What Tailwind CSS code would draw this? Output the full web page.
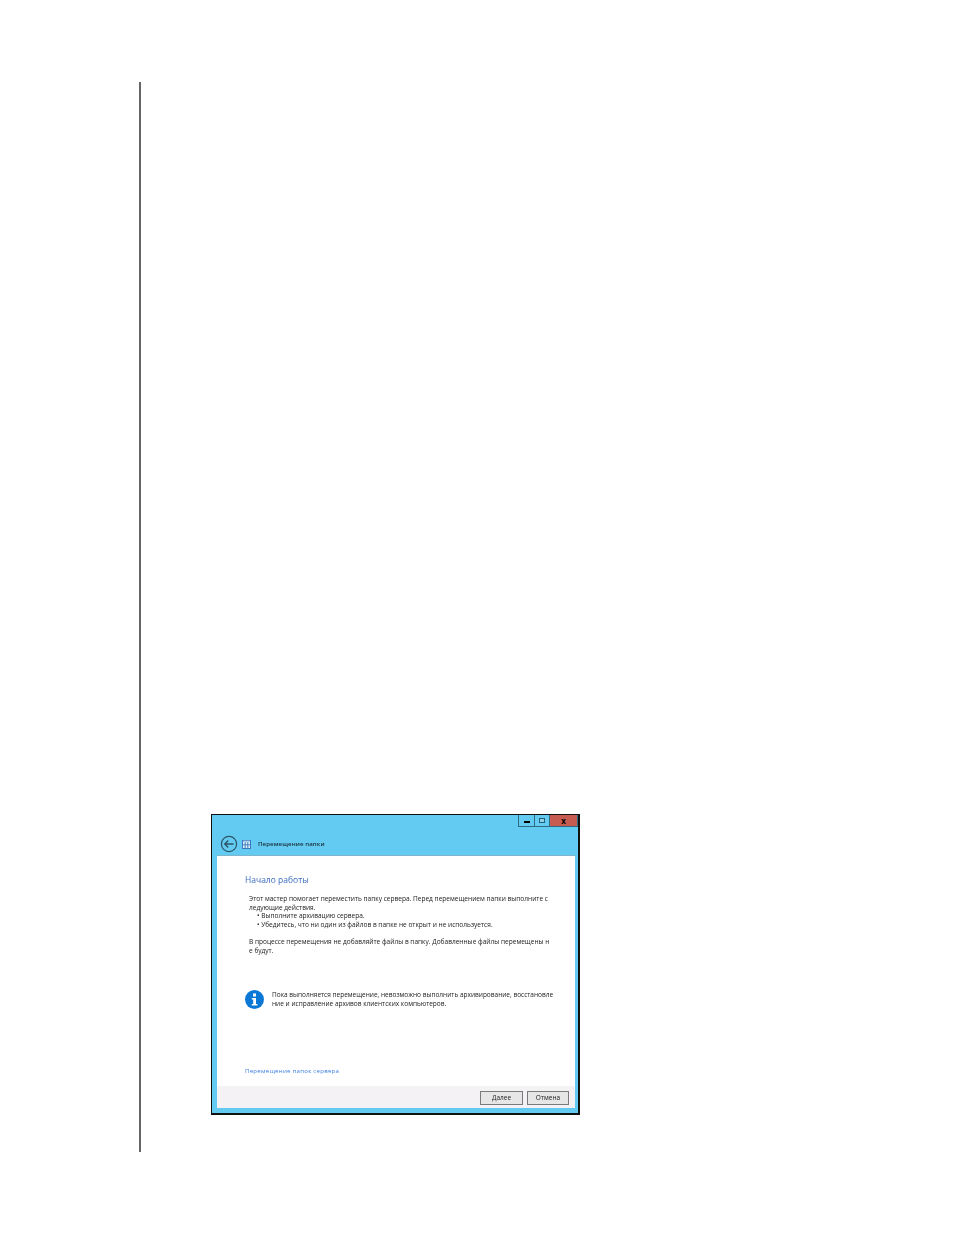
<!DOCTYPE html>
<html lang="ru">
<head>
<meta charset="utf-8">
<title>Перемещение папки</title>
<script src="https://cdn.jsdelivr.net/npm/@tailwindcss/browser@4"></script>
</head>
<body class="bg-white font-['Open_Sans','Noto_Sans',sans-serif]">
<div class="w-[954px] h-[1235px] pt-[82px] pl-[139px]">
  <div class="h-[1070px] w-[600px] border-l-2 border-[#666666] pt-[732px] pl-[70px]">
    <div class="w-[369px] h-[301px] border border-r-2 border-b-2 border-[#111111] bg-[#63cbf1] flex flex-col">
      <div class="h-[40px] relative flex items-end shrink-0">
        <div class="absolute top-0 right-0 flex h-[12px] border border-t-0 border-[#2f6b80]">
          <div class="w-[16px] flex items-center justify-center border-r border-[#2f6b80]"><div class="w-[6px] h-[2px] mt-[2px] bg-black"></div></div>
          <div class="w-[15px] flex items-center justify-center border-r border-[#2f6b80]"><div class="w-[6px] h-[5px] border border-[#1f5f78] bg-[#8fd0e8]"></div></div>
          <div class="w-[27px] flex items-center justify-center bg-[#c75b52] text-[8px] font-bold leading-none text-black">x</div>
        </div>
        <div class="flex items-center ml-[8px] mb-[2px]">
          <svg width="18" height="18" viewBox="0 0 18 18" fill="none" stroke="#2b5468">
            <circle cx="9" cy="9" r="7.6" stroke-width="1.2"/>
            <path d="M13.5 9H5M8.2 5.6 4.8 9l3.4 3.4" stroke-width="1.4"/>
          </svg>
          <svg class="ml-[4px]" width="9" height="9" viewBox="0 0 9 9">
            <rect x="0" y="0" width="9" height="9" fill="#d6ebf7"/>
            <path d="M0 .75h9M.5 0v9M8.5 0v9M0 8.5h9" stroke="#3a78c0"/>
            <path d="M3.2 2v6M5.8 2v6M1 4.8h7" stroke="#3a78c0" stroke-width="0.9"/>
          </svg>
          <span class="ml-[7px] text-[6.1px] leading-none font-semibold text-[#1a2c38] tracking-[0.1px] blur-[0.3px]">Перемещение папки</span>
        </div>
      </div>
      <div class="ml-[5px] mr-[3px] flex-1 bg-white border-t border-[#7fb6cc] flex flex-col">
        <div class="flex-1 pl-[28px] pr-[20px] text-[6.55px] leading-[8.6px] text-[#222222] blur-[0.35px]">
          <h1 class="mt-[18px] text-[8.5px] leading-[12px] font-normal text-[#3b6cc0]">Начало работы</h1>
          <div class="mt-[9px] pl-[4px] whitespace-nowrap">
            <p>Этот мастер помогает переместить папку сервера. Перед перемещением папки выполните с</p>
            <p>ледующие действия.</p>
            <p class="pl-[8px]">• Выполните архивацию сервера.</p>
            <p class="pl-[8px]">• Убедитесь, что ни один из файлов в папке не открыт и не используется.</p>
            <p class="mt-[9px]">В процессе перемещения не добавляйте файлы в папку. Добавленные файлы перемещены н</p>
            <p>е будут.</p>
          </div>
          <div class="mt-[35px] flex items-center whitespace-nowrap text-[6.5px] leading-[8.4px]">
            <svg class="shrink-0 -mt-[1px]" width="19" height="19" viewBox="0 0 19 19">
              <circle cx="9.5" cy="9.5" r="9.5" fill="#0b78d6"/>
              <rect x="8" y="3.5" width="3" height="3" fill="#fff"/>
              <path d="M6.8 8h4.2v6h1.4v1.5H6.8V14h1.4V9.5H6.8z" fill="#fff"/>
            </svg>
            <div class="ml-[8px]">
              <p>Пока выполняется перемещение, невозможно выполнить архивирование, восстановле</p>
              <p>ние и исправление архивов клиентских компьютеров.</p>
            </div>
          </div>
          <p class="mt-[58px] text-[6.1px] tracking-[0.25px] text-[#3c7fe0] whitespace-nowrap">Перемещение папок сервера</p>
        </div>
        <div class="h-[22px] bg-[#f5f2f6] shrink-0 flex items-center justify-end gap-[4px] pr-[6px]">
          <button class="w-[43px] h-[14px] mt-[1px] pt-[2px] border border-[#7a7a7a] bg-[#e6e6e6] text-[6.5px] leading-none text-[#222222] blur-[0.3px]">Далее</button>
          <button class="w-[42px] h-[14px] mt-[1px] pt-[2px] border border-[#7a7a7a] bg-[#e6e6e6] text-[6.5px] leading-none text-[#222222] blur-[0.3px]">Отмена</button>
        </div>
      </div>
      <div class="h-[5px] shrink-0"></div>
    </div>
  </div>
</div>
</body>
</html>
